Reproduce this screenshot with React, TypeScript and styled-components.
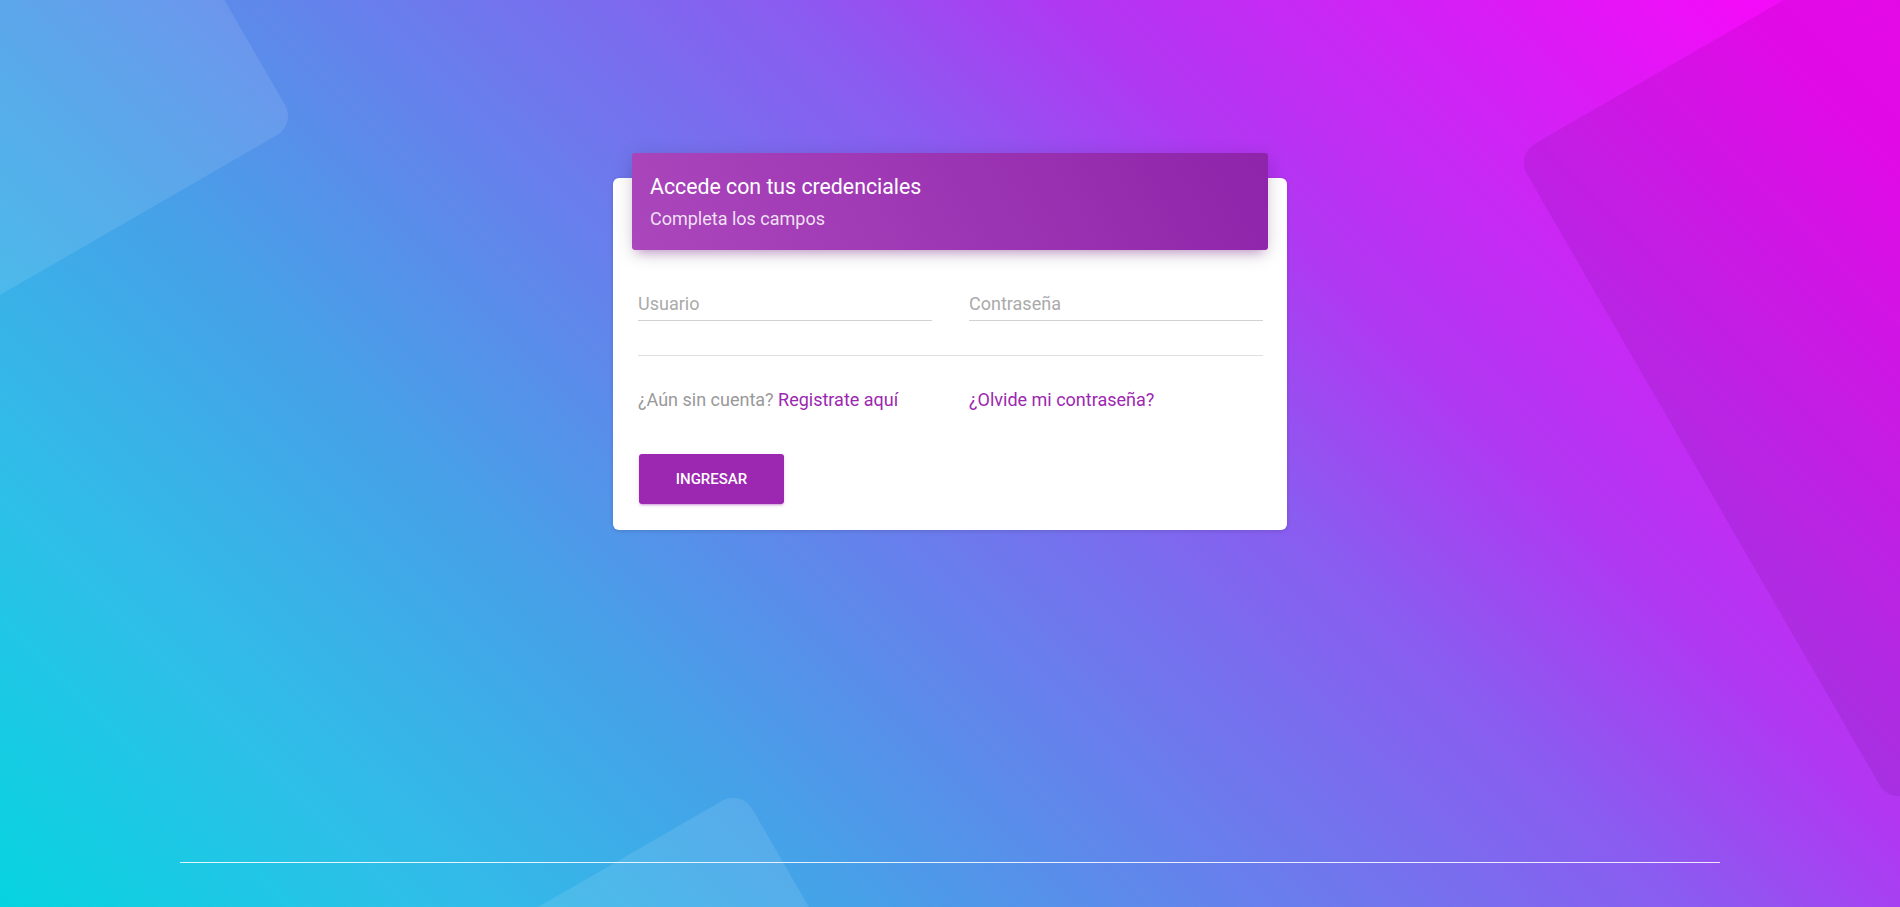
import React from 'react';
import styled, { createGlobalStyle } from 'styled-components';

const GlobalStyle = createGlobalStyle`
  * {
    box-sizing: border-box;
  }
  body {
    margin: 0;
    font-family: Roboto, 'Liberation Sans', Arial, sans-serif;
  }
`;

const Page = styled.div`
  position: relative;
  min-height: 100vh;
  height: 907px;
  overflow: hidden;
  display: flex;
  flex-direction: column;
  background: linear-gradient(45deg, #06d4e0 0%, #2ebfe8 15%, #47a0e8 31%, #8a5cf0 60%, #b038f2 70%, #f20cf8 94%, #f60af9 100%);
`;

const Shape = styled.div<{ size: number; left: number; top: number; tint: string }>`
  position: absolute;
  left: ${({ left }) => left}px;
  top: ${({ top }) => top}px;
  width: ${({ size }) => size}px;
  height: ${({ size }) => size}px;
  border-radius: 22px;
  background: ${({ tint }) => tint};
  transform: rotate(-30deg);
  pointer-events: none;
`;

const Main = styled.main`
  position: relative;
  flex: 1;
  display: flex;
  justify-content: center;
  padding-top: 178px;
`;

const Card = styled.div`
  width: 674px;
  height: 352px;
  background: #fff;
  border-radius: 6px;
  box-shadow: 0 1px 4px 0 rgba(0, 0, 0, 0.14);
  display: flex;
  flex-direction: column;
`;

const CardHeader = styled.div`
  margin: -25px 19px 0;
  height: 97px;
  padding: 19px 18px 0;
  border-radius: 3px;
  background: linear-gradient(60deg, #ab47bc, #8e24aa);
  box-shadow: 0 4px 20px 0 rgba(0, 0, 0, 0.14), 0 7px 10px -5px rgba(156, 39, 176, 0.4);
  color: #fff;
`;

const Title = styled.h4`
  margin: 0;
  font-size: 21.3px;
  font-weight: 400;
  line-height: 30px;
`;

const Subtitle = styled.p`
  margin: 4px 0 0;
  font-size: 18px;
  line-height: 26px;
  color: rgba(255, 255, 255, 0.85);
`;

const CardBody = styled.div`
  padding: 36px 24px 0 25px;
  display: flex;
  flex-direction: column;
`;

const FieldRow = styled.div`
  display: grid;
  grid-template-columns: 1fr 1fr;
  column-gap: 37px;
`;

const Input = styled.input`
  width: 100%;
  height: 35px;
  border: 0;
  border-bottom: 1px solid #d2d2d2;
  padding: 0;
  font-family: inherit;
  font-size: 18px;
  color: #555;
  background: transparent;
  outline: none;
  &::placeholder {
    color: #aaa;
  }
`;

const Divider = styled.div`
  height: 1px;
  margin-top: 34px;
  background: #e0e0e0;
`;

const LinksRow = styled.div`
  display: grid;
  grid-template-columns: 1fr 1fr;
  column-gap: 37px;
  margin-top: 32px;
  font-size: 18px;
  line-height: 24px;
`;

const Muted = styled.span`
  color: #999;
`;

const Link = styled.a`
  color: #9c27b0;
  text-decoration: none;
  cursor: pointer;
`;

const Button = styled.button`
  margin-top: 42px;
  width: 145px;
  height: 50px;
  margin-left: 1px;
  border: 0;
  border-radius: 3px;
  background: #9c27b0;
  color: #fff;
  font-family: inherit;
  font-size: 15px;
  font-weight: 500;
  text-transform: uppercase;
  box-shadow: 0 2px 2px 0 rgba(156, 39, 176, 0.14), 0 3px 1px -2px rgba(156, 39, 176, 0.2),
    0 1px 5px 0 rgba(156, 39, 176, 0.12);
  cursor: pointer;
`;

const Footer = styled.footer`
  position: relative;
  width: 1540px;
  margin: 0 auto;
  height: 45px;
  border-top: 1px solid rgba(255, 255, 255, 0.85);
`;

export default function App() {
  return (
    <>
      <GlobalStyle />
      <Page>
        <Shape size={700} left={-532} top={-354} tint="rgba(255, 255, 255, 0.1)" />
        <Shape size={750} left={1653} top={-83} tint="rgba(40, 0, 50, 0.09)" />
        <Shape size={400} left={468} top={863} tint="rgba(255, 255, 255, 0.1)" />
        <Main>
          <Card>
            <CardHeader>
              <Title>Accede con tus credenciales</Title>
              <Subtitle>Completa los campos</Subtitle>
            </CardHeader>
            <CardBody>
              <FieldRow>
                <Input type="text" placeholder="Usuario" />
                <Input type="password" placeholder="Contraseña" />
              </FieldRow>
              <Divider />
              <LinksRow>
                <span>
                  <Muted>¿Aún sin cuenta? </Muted>
                  <Link>Registrate aquí</Link>
                </span>
                <Link>¿Olvide mi contraseña?</Link>
              </LinksRow>
              <Button type="button">Ingresar</Button>
            </CardBody>
          </Card>
        </Main>
        <Footer />
      </Page>
    </>
  );
}
